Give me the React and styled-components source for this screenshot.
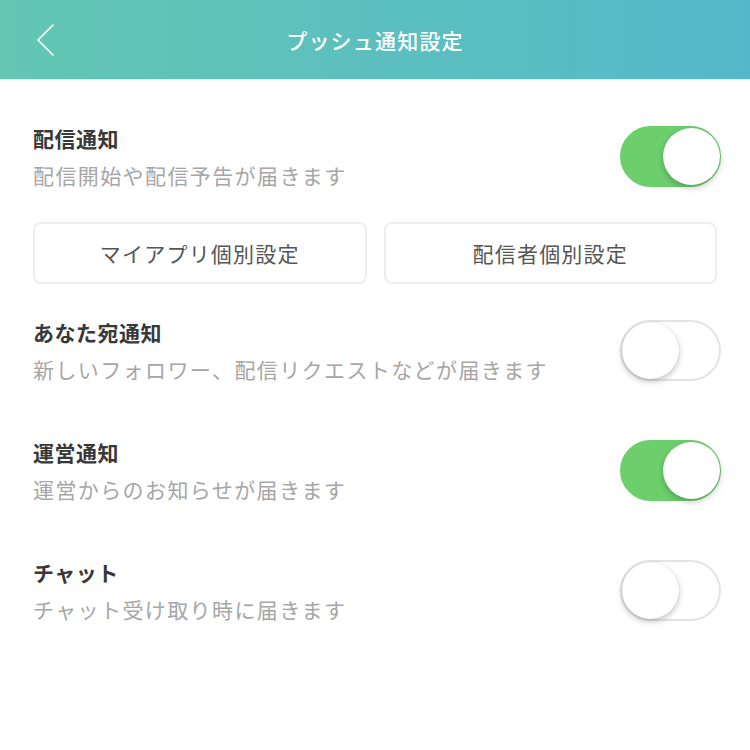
import React, { useState } from 'react';
import styled, { createGlobalStyle } from 'styled-components';

const GlobalStyle = createGlobalStyle`
  html, body {
    margin: 0;
    padding: 0;
    background: #ffffff;
  }
  body {
    font-family: "Noto Sans CJK JP", "Noto Sans", sans-serif;
  }
`;

const Page = styled.div`
  width: 750px;
  min-height: 750px;
  background: #fff;
`;

const Header = styled.header`
  height: 80px;
  display: flex;
  align-items: center;
  justify-content: center;
  position: relative;
  background: linear-gradient(90deg, #63c7b3 0%, #5cbfbe 50%, #55b8ca 100%);
  border-bottom: 1px solid #e9ecec;
  box-sizing: border-box;
`;

const BackButton = styled.button`
  position: absolute;
  left: 30px;
  top: 50%;
  transform: translateY(-50%);
  background: none;
  border: none;
  padding: 4px;
  display: flex;
  cursor: pointer;
`;

const Title = styled.h1`
  margin: 0;
  color: #fff;
  font-size: 21px;
  font-weight: 500;
  letter-spacing: 1.2px;
`;

const Content = styled.main`
  padding: 16px 33px 0 33px;
`;

const Row = styled.div`
  height: ${p => p.$h || 121}px;
  display: flex;
  align-items: center;
  justify-content: space-between;
`;

const TextBlock = styled.div`
  display: flex;
  flex-direction: column;
  gap: 7px;
`;

const RowTitle = styled.div`
  color: #383838;
  font-size: 21px;
  font-weight: 700;
  letter-spacing: 0.5px;
  line-height: 30px;
`;

const RowSub = styled.div`
  color: #a6a6a6;
  font-size: 21px;
  letter-spacing: 1.4px;
  line-height: 30px;
`;

const ButtonRow = styled.div`
  display: grid;
  grid-template-columns: 1fr 1fr;
  gap: 17px;
  margin: 5px 0 6px 0;
`;

const OutlineButton = styled.button`
  height: 62px;
  border: 2px solid #eeeeee;
  border-radius: 8px;
  background: #fff;
  color: #555;
  font-family: inherit;
  font-size: 21px;
  letter-spacing: 1.2px;
  cursor: pointer;
`;

const Track = styled.button`
  width: 101px;
  height: 61px;
  border-radius: 31px;
  border: 2px solid ${p => (p.$on ? '#6ccf6c' : '#e4e4e4')};
  background: ${p => (p.$on ? '#6ccf6c' : '#fff')};
  position: relative;
  padding: 0;
  margin-right: -4px;
  box-sizing: border-box;
  cursor: pointer;
  flex-shrink: 0;
`;

const Knob = styled.span`
  position: absolute;
  top: 0px;
  left: ${p => (p.$on ? '41px' : '0px')};
  width: 57px;
  height: 57px;
  border-radius: 50%;
  background: #fff;
  box-shadow: 0 3px 6px rgba(0, 0, 0, 0.22), 0 0 1px rgba(0, 0, 0, 0.2);
`;

function Toggle({ on, onClick }) {
  return (
    <Track $on={on} onClick={onClick}>
      <Knob $on={on} />
    </Track>
  );
}

const items = [
  { key: 'live', title: '配信通知', sub: '配信開始や配信予告が届きます' },
  { key: 'you', title: 'あなた宛通知', sub: '新しいフォロワー、配信リクエストなどが届きます' },
  { key: 'ops', title: '運営通知', sub: '運営からのお知らせが届きます' },
  { key: 'chat', title: 'チャット', sub: 'チャット受け取り時に届きます' },
];

export default function App() {
  const [state, setState] = useState({ live: true, you: false, ops: true, chat: false });
  const flip = k => setState(s => ({ ...s, [k]: !s[k] }));

  const renderRow = (it, h) => (
    <Row key={it.key} $h={h}>
      <TextBlock>
        <RowTitle>{it.title}</RowTitle>
        <RowSub>{it.sub}</RowSub>
      </TextBlock>
      <Toggle on={state[it.key]} onClick={() => flip(it.key)} />
    </Row>
  );

  return (
    <Page>
      <GlobalStyle />
      <Header>
        <BackButton aria-label="戻る">
          <svg width="22" height="34" viewBox="0 0 22 34" fill="none">
            <path d="M19 2 L4 17 L19 32" stroke="#fff" strokeWidth="1.6" strokeLinecap="round" strokeLinejoin="round" />
          </svg>
        </BackButton>
        <Title>プッシュ通知設定</Title>
      </Header>
      <Content>
        {renderRow(items[0], 121)}
        <ButtonRow>
          <OutlineButton>マイアプリ個別設定</OutlineButton>
          <OutlineButton>配信者個別設定</OutlineButton>
        </ButtonRow>
        {items.slice(1).map(it => renderRow(it, 120))}
      </Content>
    </Page>
  );
}
